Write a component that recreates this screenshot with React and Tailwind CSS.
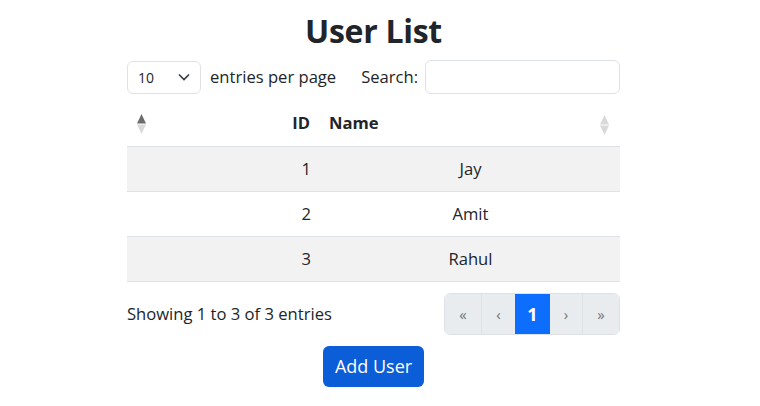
import React from 'react';

const users = [
  { id: 1, name: 'Jay' },
  { id: 2, name: 'Amit' },
  { id: 3, name: 'Rahul' },
];

const SortIcon = ({ upDark }) => (
  <svg width="11" height="22" viewBox="0 0 11 22" className="block">
    <path d="M5.5 1 L10 10.5 L1 10.5 Z" fill={upDark ? '#6c6c6c' : '#d9d9d9'} />
    <path d="M5.5 21 L10 11.5 L1 11.5 Z" fill="#d9d9d9" />
  </svg>
);

const App = () => {
  return (
    <div
      className="w-[760px] h-[406px] bg-white text-[#212529] flex flex-col items-center pr-[13px]"
      style={{ fontFamily: '"Open Sans", "Noto Sans", sans-serif' }}
    >
      <h1 className="mt-[10px] text-[32px] font-bold leading-[42px] tracking-[-0.3px]">User List</h1>

      <div className="w-[493px]">
        {/* Contrôles du haut */}
        <div className="mt-[8px] flex items-center h-[34px] text-[16.6px]">
          <div className="w-[74px] h-[33px] border border-[#dee2e6] rounded-[6px] flex items-center justify-between pl-[10px] pr-[10px] text-[14px]">
            <span>10</span>
            <svg width="12" height="8" viewBox="0 0 12 8">
              <path d="M1 1.5 L6 6.5 L11 1.5" fill="none" stroke="#343a40" strokeWidth="1.6" />
            </svg>
          </div>
          <span className="ml-[9px]">entries per page</span>
          <span className="ml-[25px]">Search:</span>
          <div className="ml-[7px] flex-1 h-[34px] border border-[#dee2e6] rounded-[6px]" />
        </div>

        {/* Tableau */}
        <div className="mt-[7px]">
          <div className="relative grid grid-cols-[194px_1fr] h-[46px] border-b border-[#dee2e6] items-center font-bold text-[16.6px]">
            <div className="text-right pr-[11px]">ID</div>
            <div className="pl-[8px]">Name</div>
            <div className="absolute left-[9px] top-[12px]">
              <SortIcon upDark />
            </div>
            <div className="absolute right-[10px] top-[13px]">
              <SortIcon />
            </div>
          </div>
          {users.map((u, i) => (
            <div
              key={u.id}
              className={`grid grid-cols-[194px_1fr] h-[45px] border-b border-[#dee2e6] items-center text-[16.6px] ${
                i % 2 === 0 ? 'bg-[#f2f2f2]' : 'bg-white'
              }`}
            >
              <div className="text-right pr-[10px]">{u.id}</div>
              <div className="text-center">{u.name}</div>
            </div>
          ))}
        </div>

        {/* Bas du tableau */}
        <div className="mt-[11px] flex items-center justify-between">
          <span className="text-[16.6px]">Showing 1 to 3 of 3 entries</span>
          <div className="flex h-[42px] rounded-[6px] overflow-hidden border border-[#dee2e6] text-[15px] text-[#6c757d]">
            <div className="w-[37px] flex items-center justify-center bg-[#e9ecef] border-r border-[#dee2e6]">«</div>
            <div className="w-[33px] flex items-center justify-center bg-[#e9ecef]">‹</div>
            <div className="w-[35px] flex items-center justify-center bg-[#0d6efd] text-white font-bold text-[18px]">1</div>
            <div className="w-[33px] flex items-center justify-center bg-[#e9ecef] border-r border-[#dee2e6]">›</div>
            <div className="w-[36px] flex items-center justify-center bg-[#e9ecef]">»</div>
          </div>
        </div>
      </div>

      <button className="mt-[11px] w-[101px] h-[41px] rounded-[6px] bg-[#0b5ed7] text-white text-[18px]">
        Add User
      </button>
    </div>
  );
};

export default App;
